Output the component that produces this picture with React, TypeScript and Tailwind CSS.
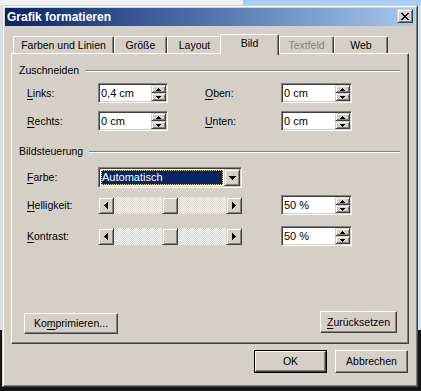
import React from "react";

// classic 3d edges
const bevel =
  "border border-t-[#d4d0c8] border-l-[#d4d0c8] border-r-[#404040] border-b-[#404040] shadow-[inset_1px_1px_#fff,inset_-1px_-1px_#808080]";
const btnEdge =
  "border border-t-white border-l-white border-r-[#404040] border-b-[#404040] shadow-[inset_-1px_-1px_#808080]";
const sunken =
  "border border-t-[#808080] border-l-[#808080] border-r-white border-b-white shadow-[inset_1px_1px_#404040,inset_-1px_-1px_#d4d0c8]";

const U = ({ children }: { children: React.ReactNode }) => (
  <span className="underline underline-offset-[2px]">{children}</span>
);

type Dir = "up" | "down" | "left" | "right";

function Arrow({ dir }: { dir: Dir }) {
  if (dir === "up" || dir === "down") {
    const rows = dir === "up" ? [0, 1, 2] : [2, 1, 0];
    return (
      <svg width="5" height="3" shapeRendering="crispEdges">
        {rows.map((r, i) => (
          <rect key={i} x={2 - r} y={i} width={r * 2 + 1} height={1} fill="#000" />
        ))}
      </svg>
    );
  }
  const cols = dir === "left" ? [0, 1, 2, 3] : [3, 2, 1, 0];
  return (
    <svg width="4" height="7" shapeRendering="crispEdges">
      {cols.map((c, i) => (
        <rect key={i} x={i} y={3 - c} width={1} height={c * 2 + 1} fill="#000" />
      ))}
    </svg>
  );
}

function DownCaret() {
  return (
    <svg width="7" height="4" shapeRendering="crispEdges">
      {[3, 2, 1, 0].map((r, i) => (
        <rect key={i} x={3 - r} y={i} width={r * 2 + 1} height={1} fill="#000" />
      ))}
    </svg>
  );
}

function CloseX() {
  const rows = [
    [0, 6],
    [1, 5],
    [2, 4],
    [3, 3],
    [2, 4],
    [1, 5],
    [0, 6],
  ];
  return (
    <svg width="8" height="7" shapeRendering="crispEdges">
      {rows.map(([a, b], y) =>
        a === b ? (
          <rect key={y} x={3} y={y} width={2} height={1} fill="#000" />
        ) : (
          <g key={y}>
            <rect x={a} y={y} width={2} height={1} fill="#000" />
            <rect x={b} y={y} width={2} height={1} fill="#000" />
          </g>
        )
      )}
    </svg>
  );
}

function Spin() {
  return (
    <div className="flex flex-col w-[15px] h-full">
      <div className={`${bevel} flex-1 bg-[#d4d0c8] flex items-center justify-center`}>
        <Arrow dir="up" />
      </div>
      <div className={`${bevel} flex-1 bg-[#d4d0c8] flex items-center justify-center`}>
        <Arrow dir="down" />
      </div>
    </div>
  );
}

function NumField({ value, className }: { value: string; className: string }) {
  return (
    <div className={`${sunken} bg-white h-[20px] p-[1px] flex ${className}`}>
      <div className="flex-1 pl-[1px] leading-[16px] text-[11px]">{value}</div>
      <Spin />
    </div>
  );
}

function Slider() {
  return (
    <div className="flex h-[17px] w-[144px]">
      <div className={`${bevel} w-[16px] bg-[#d4d0c8] flex items-center justify-center`}>
        <Arrow dir="left" />
      </div>
      <div className="flex-1 pl-[48px] bg-[repeating-conic-gradient(#d4d0c8_0_25%,#fff_0_50%)] bg-[length:2px_2px]">
        <div className={`${bevel} w-[16px] h-full bg-[#d4d0c8]`} />
      </div>
      <div className={`${bevel} w-[16px] bg-[#d4d0c8] flex items-center justify-center`}>
        <Arrow dir="right" />
      </div>
    </div>
  );
}

function GroupHeader({ title, className }: { title: string; className: string }) {
  return (
    <div className={`flex items-center h-[13px] ml-[7px] mr-[8px] ${className}`}>
      <span>{title}</span>
      <div className="flex-1 ml-[6px] h-[2px] border-t border-b border-t-[#808080] border-b-white" />
    </div>
  );
}

const tabs = [
  { label: "Farben und Linien", w: "w-[101px]" },
  { label: "Größe", w: "w-[53px]" },
  { label: "Layout", w: "w-[55px] mr-[-2px]" },
  { label: "Bild", w: "w-[59px]", active: true },
  { label: "Textfeld", w: "w-[55px]", disabled: true },
  { label: "Web", w: "w-[54px]" },
];

export default function App() {
  return (
    <div className="w-[421px] h-[391px] overflow-hidden pt-[5px] pl-[2px] [background:linear-gradient(to_right,#eef1f4_243px,#a9cdf2_243px)_0_0/100%_5px_no-repeat,linear-gradient(#d6e2ee_330px,#161616_330px)]">
      <div
        className={`${bevel} w-[416px] h-[382px] bg-[#d4d0c8] p-[2px] flex flex-col text-black text-[10.5px] leading-[13px] font-['Liberation_Sans',Arial,sans-serif]`}
      >
        {/* title bar */}
        <div className="h-[18px] flex items-start justify-between bg-linear-to-r from-[#0a246a] to-[#a6caf0]">
          <span className="pl-[2px] text-white font-bold text-[12px] leading-[18px]">
            Grafik formatieren
          </span>
          <div className={`${bevel} mt-[1px] mr-[2px] w-[16px] h-[14px] bg-[#d4d0c8] flex items-center justify-center`}>
            <CloseX />
          </div>
        </div>

        {/* tabs */}
        <div className="h-[27px] flex items-end pl-[8px]">
          {tabs.map((t) =>
            t.active ? (
              <div
                key={t.label}
                className={`${t.w} relative z-10 h-[21px] mb-[-2px] bg-[#d4d0c8] border border-b-0 border-t-white border-l-white border-r-[#404040] shadow-[inset_-1px_0_#808080] rounded-t-[2px] flex items-center justify-center pb-[3px]`}
              >
                {t.label}
              </div>
            ) : (
              <div
                key={t.label}
                className={`${t.w} h-[17px] border border-b-0 border-t-white border-l-white border-r-[#404040] shadow-[inset_-1px_0_#808080] rounded-t-[2px] flex items-center justify-center pt-[1px] ${
                  t.disabled ? "text-[#808080]" : ""
                }`}
              >
                {t.label}
              </div>
            )
          )}
        </div>

        {/* panel */}
        <div className="mx-[6px] h-[291px] border border-t-white border-l-white border-r-[#404040] border-b-[#404040] shadow-[inset_-1px_-1px_#808080] flex flex-col">
          <GroupHeader title="Zuschneiden" className="mt-[10px]" />

          <div className="mt-[6px] flex items-center h-[20px]">
            <span className="ml-[15px] w-[71px]">
              <U>L</U>inks:
            </span>
            <NumField value="0,4 cm" className="w-[70px]" />
            <span className="ml-[37px] w-[76px]">
              <U>O</U>ben:
            </span>
            <NumField value="0 cm" className="w-[71px]" />
          </div>

          <div className="mt-[8px] flex items-center h-[20px]">
            <span className="ml-[15px] w-[71px]">
              <U>R</U>echts:
            </span>
            <NumField value="0 cm" className="w-[70px]" />
            <span className="ml-[37px] w-[76px]">
              <U>U</U>nten:
            </span>
            <NumField value="0 cm" className="w-[71px]" />
          </div>

          <GroupHeader title="Bildsteuerung" className="mt-[14px]" />

          <div className="mt-[9px] flex items-center h-[21px]">
            <span className="ml-[15px] w-[71px]">
              <U>F</U>arbe:
            </span>
            <div className={`${sunken} bg-white w-[144px] h-[21px] p-[1px] flex`}>
              <div className="flex-1 p-[1px]">
                <div className="h-full bg-[#0a246a] text-white text-[11px] leading-[14px] pl-[1px] outline-1 outline-dotted outline-[#e8d890] -outline-offset-1">
                  Automatisch
                </div>
              </div>
              <div className={`${bevel} w-[16px] bg-[#d4d0c8] flex items-center justify-center`}>
                <DownCaret />
              </div>
            </div>
          </div>

          <div className="mt-[7px] flex items-center h-[20px]">
            <span className="ml-[15px] w-[71px]">
              <U>H</U>elligkeit:
            </span>
            <Slider />
            <div className="w-[39px]" />
            <NumField value="50 %" className="w-[71px]" />
          </div>

          <div className="mt-[11px] flex items-center h-[20px]">
            <span className="ml-[15px] w-[71px]">
              <U>K</U>ontrast:
            </span>
            <Slider />
            <div className="w-[39px]" />
            <NumField value="50 %" className="w-[71px]" />
          </div>

          <div className="mt-auto flex justify-between items-end pl-[12px] pr-[11px] pb-[9px]">
            <div className={`${btnEdge} w-[94px] h-[21px] flex items-center justify-center`}>
              <span>
                Ko<U>m</U>primieren...
              </span>
            </div>
            <div className={`${btnEdge} mb-[1px] w-[77px] h-[22px] flex items-center justify-center`}>
              <span>
                <U>Z</U>urücksetzen
              </span>
            </div>
          </div>
        </div>

        {/* dialog buttons */}
        <div className="mt-[6px] flex justify-end gap-[8px] pr-[7px]">
          <div className="w-[73px] h-[23px] border border-black">
            <div className={`${btnEdge} h-full flex items-center justify-center`}>OK</div>
          </div>
          <div className={`${btnEdge} w-[73px] h-[23px] flex items-center justify-center`}>
            Abbrechen
          </div>
        </div>
      </div>
    </div>
  );
}
